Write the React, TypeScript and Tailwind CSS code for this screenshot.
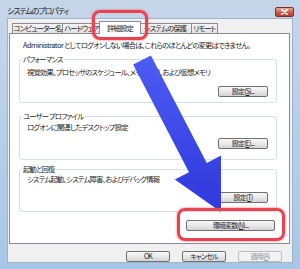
const tabs = [
  { label: "コンピューター名", w: "w-[51px]" },
  { label: "ハードウェア", w: "w-[39px]" },
  { label: "詳細設定", w: "w-[42px]", active: true },
  { label: "システムの保護", w: "w-[54px]" },
  { label: "リモート", w: "w-[27px]" },
];

function Btn({ className = "", disabled = false, children }: { className?: string; disabled?: boolean; children: React.ReactNode }) {
  const look = disabled
    ? "border-[#b9bcbf] bg-[#f3f3f3] text-[#8f8f8f]"
    : "border-[#707070] bg-linear-to-b from-[#f7f7f7] via-[#e9e9e9] to-[#d3d3d3] text-[#1c1c1c]";
  return (
    <div className={`h-[11px] flex items-center justify-center whitespace-nowrap rounded-[2px] border text-[7px] leading-none ${look} ${className}`}>
      {children}
    </div>
  );
}

function Group({ title, children, className = "" }: { title: string; children: React.ReactNode; className?: string }) {
  return (
    <fieldset className={`ml-[9px] mr-[12px] pl-[2px] pr-[8px] border border-[#d5dfe5] rounded-[3px] ${className}`}>
      <legend className="px-[1px] leading-[9px]">{title}</legend>
      {children}
    </fieldset>
  );
}

export default function App() {
  return (
    <div className="relative w-[300px] h-[269px] overflow-hidden flex flex-col bg-linear-to-b from-[#c6d6e9] to-[#a7c7e8] text-[#1a1a1a] text-[7.3px] leading-[9px] tracking-[-0.8px] font-['Noto_Sans_CJK_JP',sans-serif] [font-feature-settings:'palt']">
      {/* title bar */}
      <div className="h-[18px] flex items-center justify-between pl-[7px] pr-[6px] pt-[2px]">
        <span className="text-[8px] tracking-[-1.1px] text-[#1e1e1e]">システムのプロパティ</span>
        <div className="w-[19px] h-[10px] mt-[3px] rounded-[2px] border border-[#7a3028] bg-linear-to-b from-[#e8a99e] via-[#d0604f] to-[#c0392b] flex items-center justify-center">
          <svg width="7" height="6" viewBox="0 0 7 6">
            <path d="M1 0.8 L6 5.2 M6 0.8 L1 5.2" stroke="#fff" strokeWidth="1.6" strokeLinecap="round" />
          </svg>
        </div>
      </div>

      {/* client area */}
      <div className="flex-1 mx-[7px] mb-[6px] bg-[#f0f0f0] border border-[#9fb4ca] flex flex-col">
        <div className="flex items-end h-[14px] pl-[4px] whitespace-nowrap">
          {tabs.map((t, i) =>
            t.active ? (
              <div key={t.label} className={`${t.w} h-[13px] -mx-[2px] mb-[-1px] relative z-10 bg-white border border-b-0 border-[#898c95] flex items-center justify-center`}>
                {t.label}
              </div>
            ) : (
              <div key={t.label} className={`${t.w} h-[10px] ${i > 0 ? "-ml-px" : ""} border border-b-0 border-[#898c95] bg-linear-to-b from-[#f5f5f5] to-[#e1e1e1] flex items-center justify-center`}>
                {t.label}
              </div>
            )
          )}
        </div>

        <div className="ml-[1px] mr-[2px] h-[211px] bg-white border border-[#898c95] flex flex-col">
          <p className="mt-[7px] pl-[13px] whitespace-nowrap">
            <span className="tracking-[-0.5px]">Administrator</span> としてログオンしない場合は、これらのほとんどの変更はできません。
          </p>

          <Group title="パフォーマンス" className="mt-[5px] pb-[5px]">
            <p className="ml-[5px] mt-[4px]">視覚効果、プロセッサのスケジュール、メモリ使用、および仮想メモリ</p>
            <div className="flex justify-end mt-[9px]">
              <Btn className="w-[50px]">設定(<span className="underline">S</span>)...</Btn>
            </div>
          </Group>

          <Group title="ユーザー プロファイル" className="mt-[9px] pb-[10px]">
            <p className="ml-[5px] mt-[2px]">ログオンに関連したデスクトップ設定</p>
            <div className="flex justify-end mt-[6px]">
              <Btn className="w-[50px]">設定(<span className="underline">E</span>)...</Btn>
            </div>
          </Group>

          <Group title="起動と回復" className="mt-[5px] pb-[8px]">
            <p className="ml-[5px] mt-[1px]">システム起動、システム障害、およびデバッグ情報</p>
            <div className="flex justify-end mt-[8px]">
              <Btn className="w-[50px]">設定(<span className="underline">T</span>)</Btn>
            </div>
          </Group>

          <div className="flex justify-end mt-[8px] mr-[14px]">
            <Btn className="w-[89px]">環境変数(<span className="underline">N</span>)...</Btn>
          </div>
        </div>

        <div className="flex justify-end gap-[12px] mt-[7px] pr-[10px]">
          <Btn className="w-[44px] border-[#3c7fb1]">OK</Btn>
          <Btn className="w-[44px]">キャンセル</Btn>
          <Btn className="w-[44px]" disabled>適用(<span className="underline">A</span>)</Btn>
        </div>
      </div>

      {/* annotation: arrow */}
      <svg className="absolute left-0 top-0 pointer-events-none" width="300" height="269" viewBox="0 0 300 269">
        <defs>
          <linearGradient id="ar" x1="0" y1="0" x2="0" y2="1">
            <stop offset="0" stopColor="#4d5cf2" />
            <stop offset="1" stopColor="#2f38dc" />
          </linearGradient>
        </defs>
        <polygon
          points="150.9,55.4 206.8,163 221,155.6 221,212 174.8,179.6 189,172.2 133.1,64.6"
          fill="url(#ar)"
        />
      </svg>

      {/* annotation: red highlights */}
      <div className="absolute left-[92px] top-[10px] w-[56px] h-[30px] rounded-[8px] border-[3px] border-[#e8434f] shadow-[0_0_2px_#e8434f]" />
      <div className="absolute left-[177px] top-[208px] w-[108px] h-[33px] rounded-[8px] border-[3px] border-[#e8434f] shadow-[0_0_2px_#e8434f]" />
    </div>
  );
}
